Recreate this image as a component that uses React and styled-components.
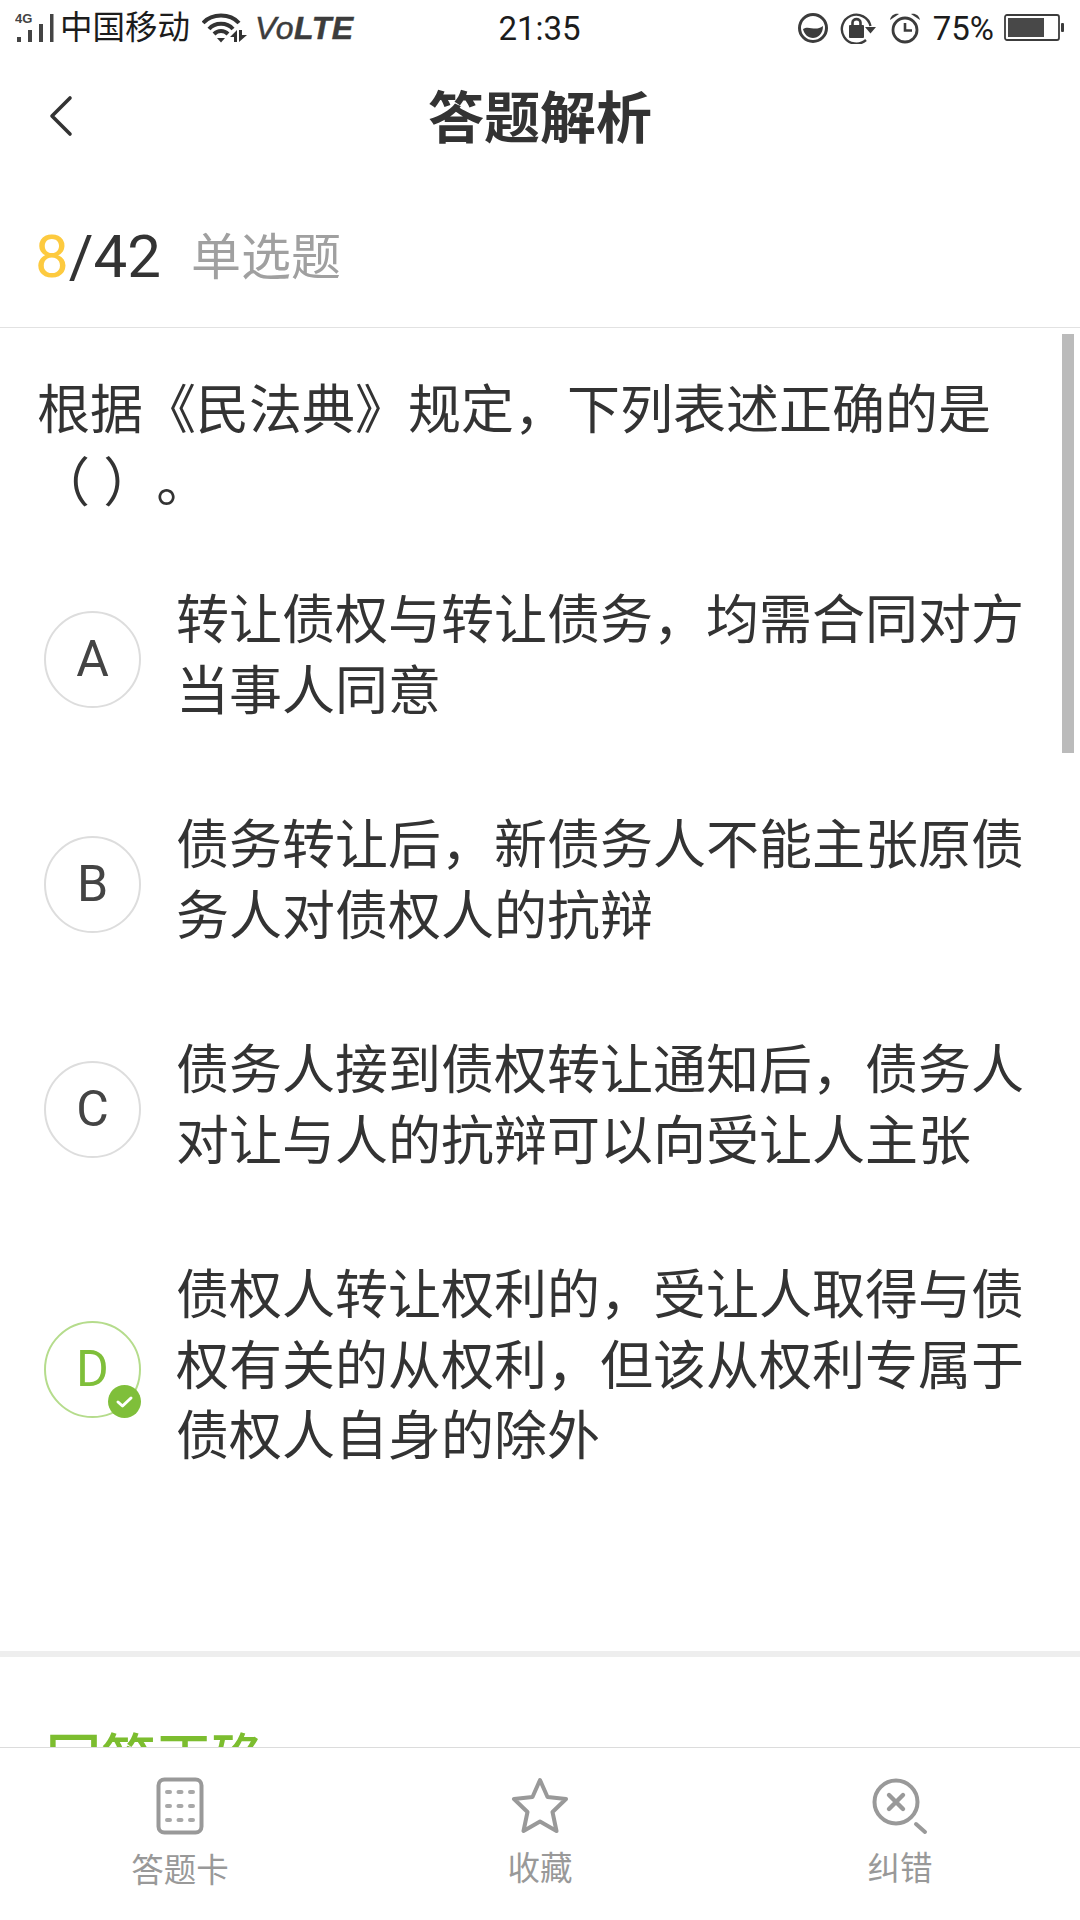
import styled, { createGlobalStyle } from "styled-components";

const GlobalStyle = createGlobalStyle`
  html, body {
    margin: 0;
    padding: 0;
    background: #fff;
  }
  * {
    box-sizing: border-box;
  }
`;

const cjk = `Roboto, "Noto Sans CJK SC", sans-serif`;

const Page = styled.div`
  width: 1080px;
  height: 1920px;
  position: relative;
  display: flex;
  flex-direction: column;
  overflow: hidden;
  background: #fff;
  color: #333;
  font-family: ${cjk};
`;

const StatusBar = styled.div`
  height: 56px;
  flex: none;
  display: grid;
  grid-template-columns: 1fr auto 1fr;
  align-items: center;
  padding: 0 16px 0 15px;
  color: #1c1c1c;
  font-size: 33px;
`;

const StatusLeft = styled.div`
  display: flex;
  align-items: center;
`;

const StatusRight = styled.div`
  display: flex;
  align-items: center;
  justify-content: flex-end;
`;

const Carrier = styled.span`
  margin: 0 12px 0 5px;
  font-size: 32.5px;
  line-height: 56px;
`;

const Volte = styled.span`
  margin-left: 7px;
  font-family: "Liberation Sans", sans-serif;
  font-style: italic;
  font-size: 32px;
  letter-spacing: 0.5px;
  -webkit-text-stroke: 0.5px #3c3c3c;
  color: #3c3c3c;
  b {
    font-weight: 700;
  }
`;

const Clock = styled.span`
  font-family: Roboto, sans-serif;
`;

const Percent = styled.span`
  margin: 0 10px 0 12px;
  font-family: Roboto, sans-serif;
`;

const StatusIcon = styled.svg`
  display: block;
  flex: none;
  margin-left: ${(p) => p.$gap || 0}px;
`;

const NavBar = styled.div`
  height: 124px;
  flex: none;
  position: relative;
  display: flex;
  align-items: center;
  justify-content: center;
  padding-bottom: 10px;
`;

const BackButton = styled.svg`
  position: absolute;
  left: 48px;
  top: 39px;
`;

const NavTitle = styled.h1`
  margin: 0;
  font-size: 56px;
  font-weight: 700;
  color: #333;
`;

const Counter = styled.div`
  height: 148px;
  flex: none;
  display: flex;
  align-items: center;
  padding: 6px 0 0 35px;
  border-bottom: 1px solid #e2e2e2;
`;

const CountNumber = styled.span`
  font-size: 60px;
  color: #333;
`;

const CountCurrent = styled.span`
  color: #fdca3f;
`;

const QuestionType = styled.span`
  margin: 0 0 7px 30px;
  font-size: 50px;
  color: #a0a0a0;
`;

const Content = styled.div`
  flex: 1;
  min-height: 0;
  overflow: hidden;
`;

const Question = styled.div`
  padding: 47px 60px 0 37px;
  font-size: 53px;
  line-height: 73px;
  text-spacing-trim: space-all;
`;

const OptionList = styled.div`
  display: flex;
  flex-direction: column;
  gap: 84px;
  padding: 65px 0 178px 44px;
`;

const OptionRow = styled.div`
  display: flex;
  align-items: center;
  gap: 35px;
`;

const Letter = styled.div`
  width: 97px;
  height: 97px;
  flex: none;
  margin-top: 5px;
  position: relative;
  display: flex;
  align-items: center;
  justify-content: center;
  border-radius: 50%;
  border: 2px solid ${(p) => (p.$correct ? "#b5dc8c" : "#ddd")};
  color: ${(p) => (p.$correct ? "#7fbf3a" : "#444")};
  font-size: 50px;
`;

const CheckBadge = styled.svg`
  position: absolute;
  right: -2px;
  bottom: -2px;
`;

const OptionText = styled.div`
  width: 856px;
  font-size: 53px;
  line-height: 70.5px;
`;

const SectionGap = styled.div`
  height: 6px;
  background: #eee;
`;

const ResultTitle = styled.div`
  padding: 67px 0 0 46px;
  font-size: 55px;
  font-weight: 500;
  line-height: 73px;
  color: #7cbd2f;
`;

const TabBar = styled.div`
  height: 173px;
  flex: none;
  display: grid;
  grid-template-columns: repeat(3, 1fr);
  border-top: 1px solid #dcdcdc;
  background: #fff;
`;

const Tab = styled.div`
  display: flex;
  flex-direction: column;
  align-items: center;
  padding-top: 29px;
  color: #999;
  font-size: 32.5px;
  line-height: 44px;
`;

const TabLabel = styled.span`
  margin-top: ${(p) => (p.$raised ? 12 : 14)}px;
`;

const ScrollThumb = styled.div`
  position: absolute;
  right: 6px;
  top: 334px;
  width: 12px;
  height: 419px;
  background: #bbb;
`;

const options = [
  { key: "A", text: "转让债权与转让债务，均需合同对方当事人同意" },
  { key: "B", text: "债务转让后，新债务人不能主张原债务人对债权人的抗辩" },
  { key: "C", text: "债务人接到债权转让通知后，债务人对让与人的抗辩可以向受让人主张" },
  { key: "D", text: "债权人转让权利的，受让人取得与债权有关的从权利，但该从权利专属于债权人自身的除外", correct: true },
];

const SignalIcon = () => (
  <StatusIcon width="40" height="30" viewBox="0 0 40 30">
    <text x="0" y="10" fontSize="13" fontWeight="700" fontFamily="Liberation Sans" fill="#444">4G</text>
    <g fill="#444">
      <rect x="2" y="24" width="4" height="5" />
      <rect x="13" y="17" width="4" height="12" />
      <rect x="24" y="11" width="4" height="18" />
      <rect x="35" y="1" width="3.500" height="28" />
    </g>
  </StatusIcon>
);

const WifiIcon = () => (
  <StatusIcon width="46" height="30" viewBox="0 0 46 30">
    <g fill="none" stroke="#333" strokeWidth="4">
      <path d="M1 10 C10 0 28 0 37 10" />
      <path d="M7 16 C13 9 25 9 31 16" />
      <path d="M12 21 C16 17 22 17 26 21" />
    </g>
    <path d="M15 25 L23 25 L19 29.500 Z" fill="#333" />
    <path d="M35 17 V29 H32 V24 H28 Z" fill="#333" />
    <path d="M37 29 V17 H40 V22 H45 Z" fill="#333" />
  </StatusIcon>
);

const DataSaverIcon = () => (
  <StatusIcon width="32" height="32" viewBox="0 0 32 32">
    <circle cx="16" cy="16" r="13.500" fill="none" stroke="#3c3c3c" strokeWidth="3" />
    <path d="M6 17 C12 13 18 20 26 14 C26 22 21 26 16 26 C11 26 7 22 6 17 Z" fill="#3c3c3c" />
  </StatusIcon>
);

const RotationLockIcon = () => (
  <StatusIcon $gap={11} width="37" height="32" viewBox="0 0 37 32">
    <path d="M30.500 14 A14.500 14.500 0 1 0 26 28" fill="none" stroke="#3c3c3c" strokeWidth="2.400" />
    <path d="M25 15 H36 L30.500 21.500 Z" fill="#3c3c3c" />
    <rect x="9" y="13" width="15" height="13" rx="1" fill="#3c3c3c" />
    <path d="M12.500 14 V10.500 C12.500 6 20.500 6 20.500 10.500 V14" fill="none" stroke="#3c3c3c" strokeWidth="2.600" />
  </StatusIcon>
);

const AlarmIcon = () => (
  <StatusIcon $gap={12} width="32" height="32" viewBox="0 0 32 32">
    <circle cx="16" cy="18" r="12" fill="none" stroke="#3c3c3c" strokeWidth="2.800" />
    <path d="M16 11 V18.500 H23" fill="none" stroke="#3c3c3c" strokeWidth="2.600" />
    <path d="M1 8 C2 3 6 1 10 2 Z M31 8 C30 3 26 1 22 2 Z" fill="#3c3c3c" />
  </StatusIcon>
);

const BatteryIcon = () => (
  <StatusIcon width="60" height="28" viewBox="0 0 60 28">
    <rect x="1" y="1" width="54" height="25" rx="2" fill="none" stroke="#3c3c3c" strokeWidth="1.800" />
    <rect x="4" y="4" width="36" height="19" fill="#484848" />
    <rect x="57" y="9" width="3" height="9" rx="1" fill="#3c3c3c" />
  </StatusIcon>
);

const ChevronIcon = () => (
  <BackButton width="28" height="42" viewBox="0 0 28 42">
    <path d="M22 3 L4 21 L22 39" fill="none" stroke="#333" strokeWidth="3.600" strokeLinecap="round" strokeLinejoin="round" />
  </BackButton>
);

const CardIcon = () => (
  <svg width="48" height="58" viewBox="0 0 48 58">
    <rect x="2.500" y="2.500" width="43" height="53" rx="6" fill="none" stroke="#999" strokeWidth="4" />
    <g stroke="#a8a8a8" strokeWidth="4" strokeLinecap="round">
      <path d="M11 15 H14 M22.500 15 H25.500 M34 15 H37" />
      <path d="M11 29 H14 M22.500 29 H25.500 M34 29 H37" />
      <path d="M11 43 H14 M22.500 43 H25.500 M34 43 H37" />
    </g>
  </svg>
);

const StarIcon = () => (
  <svg width="58" height="58" viewBox="0 0 58 58">
    <path
      d="M29 3 L36.500 20 L55 22 L41.500 35 L45.500 54 L29 44.500 L12.500 54 L16.500 35 L3 22 L21.500 20 Z"
      fill="none"
      stroke="#999"
      strokeWidth="4"
      strokeLinejoin="round"
    />
  </svg>
);

const SearchCloseIcon = () => (
  <svg width="56" height="58" viewBox="0 0 56 58">
    <circle cx="24" cy="25" r="21.500" fill="none" stroke="#999" strokeWidth="4" />
    <path d="M17 18 L31 32 M31 18 L17 32" stroke="#999" strokeWidth="4.400" strokeLinecap="round" />
    <path d="M44 47 L53 55" stroke="#999" strokeWidth="4" strokeLinecap="round" />
  </svg>
);

const App = () => {
  return (
    <>
      <GlobalStyle />
      <Page>
        <StatusBar>
          <StatusLeft>
            <SignalIcon />
            <Carrier>中国移动</Carrier>
            <WifiIcon />
            <Volte>
              Vo<b>LTE</b>
            </Volte>
          </StatusLeft>
          <Clock>21:35</Clock>
          <StatusRight>
            <DataSaverIcon />
            <RotationLockIcon />
            <AlarmIcon />
            <Percent>75%</Percent>
            <BatteryIcon />
          </StatusRight>
        </StatusBar>

        <NavBar>
          <ChevronIcon />
          <NavTitle>答题解析</NavTitle>
        </NavBar>

        <Counter>
          <CountNumber>
            <CountCurrent>8</CountCurrent>/42
          </CountNumber>
          <QuestionType>单选题</QuestionType>
        </Counter>

        <Content>
          <Question>根据《民法典》规定，下列表述正确的是（ ）。</Question>
          <OptionList>
            {options.map((o) => (
              <OptionRow key={o.key}>
                <Letter $correct={o.correct}>
                  {o.key}
                  {o.correct && (
                    <CheckBadge width="33" height="33" viewBox="0 0 33 33">
                      <circle cx="16.500" cy="16.500" r="16.500" fill="#7fbf3a" />
                      <path d="M10 17 L14.500 21 L23 13" fill="none" stroke="#fff" strokeWidth="3" strokeLinecap="round" strokeLinejoin="round" />
                    </CheckBadge>
                  )}
                </Letter>
                <OptionText>{o.text}</OptionText>
              </OptionRow>
            ))}
          </OptionList>
          <SectionGap />
          <ResultTitle>回答正确</ResultTitle>
        </Content>

        <TabBar>
          <Tab>
            <CardIcon />
            <TabLabel>答题卡</TabLabel>
          </Tab>
          <Tab>
            <StarIcon />
            <TabLabel $raised>收藏</TabLabel>
          </Tab>
          <Tab>
            <SearchCloseIcon />
            <TabLabel $raised>纠错</TabLabel>
          </Tab>
        </TabBar>

        <ScrollThumb />
      </Page>
    </>
  );
};

export default App;
